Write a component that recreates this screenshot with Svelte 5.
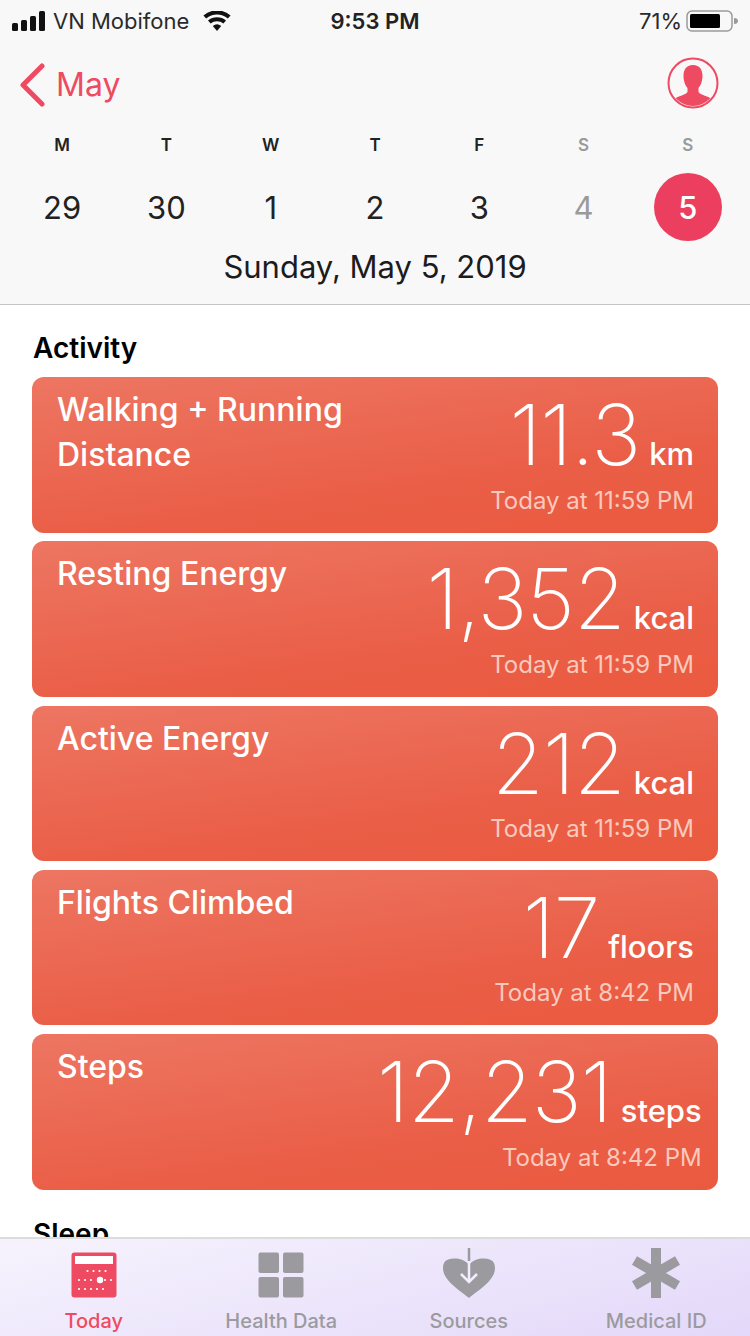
<script>
  const week = [
    { day: 'M', num: '29' },
    { day: 'T', num: '30' },
    { day: 'W', num: '1' },
    { day: 'T', num: '2' },
    { day: 'F', num: '3' },
    { day: 'S', num: '4', weekend: true },
    { day: 'S', num: '5', weekend: true, selected: true }
  ];

  const activity = [
    { title: 'Walking + Running Distance', value: '11.3', unit: 'km', time: 'Today at 11:59 PM' },
    { title: 'Resting Energy', value: '1,352', unit: 'kcal', time: 'Today at 11:59 PM' },
    { title: 'Active Energy', value: '212', unit: 'kcal', time: 'Today at 11:59 PM' },
    { title: 'Flights Climbed', value: '17', unit: 'floors', time: 'Today at 8:42 PM' },
    { title: 'Steps', value: '12,231', unit: 'steps', time: 'Today at 8:42 PM' }
  ];

  const calendarDots = [
    [84, 51], [90, 51], [96, 51], [102, 51]
  ];
</script>

<div class="screen">
  <header class="header">
    <div class="status">
      <div class="status-left">
        <svg class="signal" width="34" height="20" viewBox="0 0 34 20">
          <rect x="0" y="12" width="6" height="8" rx="1.5" />
          <rect x="9" y="9" width="6" height="11" rx="1.5" />
          <rect x="18" y="5" width="6" height="15" rx="1.5" />
          <rect x="27" y="0" width="6" height="20" rx="1.5" />
        </svg>
        <span class="carrier">VN Mobifone</span>
        <svg class="wifi" width="28" height="20" viewBox="0 0 28 20">
          <path d="M14 20 L9.8 15 A6.5 6.5 0 0 1 18.2 15 Z" />
          <path d="M7.6 12.6 L5 9.6 A14 14 0 0 1 23 9.6 L20.4 12.6 A10 10 0 0 0 7.6 12.6 Z" />
          <path d="M3.2 7.4 L0.4 4.4 A21 21 0 0 1 27.6 4.4 L24.8 7.4 A17 17 0 0 0 3.2 7.4 Z" />
        </svg>
      </div>
      <div class="clock">9:53 PM</div>
      <div class="status-right">
        <span class="percent">71%</span>
        <svg width="52" height="24" viewBox="0 0 52 24">
          <rect x="1" y="2" width="45" height="20" rx="5" fill="none" stroke="#9a9a9a" stroke-width="1.5" />
          <rect x="4" y="5" width="30" height="14" rx="1.5" fill="#000" />
          <path d="M48 9 a4 3 0 0 1 0 6 Z" fill="#9a9a9a" />
        </svg>
      </div>
    </div>

    <div class="nav">
      <div class="back">
        <svg width="28" height="44" viewBox="0 0 28 44">
          <path d="M24 3 L5 22 L24 41" fill="none" stroke="#ee4a62" stroke-width="5" stroke-linecap="round" stroke-linejoin="round" />
        </svg>
        <span>May</span>
      </div>
      <svg class="profile" width="52" height="52" viewBox="0 0 52 52">
        <defs>
          <clipPath id="profile-clip"><circle cx="26" cy="26" r="23" /></clipPath>
        </defs>
        <circle cx="26" cy="26" r="24.5" fill="none" stroke="#ee4a62" stroke-width="2" />
        <path clip-path="url(#profile-clip)" fill="#ee4a62" d="M26 8 C33 8 35.5 13 35.5 19 C35.5 24 33.5 29 31.5 31 L31.5 35 C33 38 42 39 46 43 L46 52 L6 52 L6 43 C10 39 19 38 20.5 35 L20.5 31 C18.5 29 16.5 24 16.5 19 C16.5 13 19 8 26 8 Z" />
      </svg>
    </div>

    <div class="week">
      {#each week as d}
        <div class="day" class:weekend={d.weekend}>
          <span class="dow">{d.day}</span>
          <span class="num" class:selected={d.selected}>{d.num}</span>
        </div>
      {/each}
    </div>

    <div class="full-date">Sunday, May 5, 2019</div>
  </header>

  <main class="content">
    <h2>Activity</h2>
    <div class="cards">
      {#each activity as item}
        <div class="card">
          <div class="title">{item.title}</div>
          <div class="reading">
            <div class="measure">
              <span class="value">{item.value}</span>
              <span class="unit">{item.unit}</span>
            </div>
            <div class="time">{item.time}</div>
          </div>
        </div>
      {/each}
    </div>
    <h2 class="next">Sleep</h2>
  </main>

  <nav class="tabs">
    <div class="tab active">
      <svg width="46" height="46" viewBox="0 0 46 46">
        <rect x="0.5" y="0.5" width="45" height="45" rx="3" fill="#ee4a62" />
        <rect x="4" y="4" width="38" height="8" fill="#fff" />
        <g fill="#fff">
          {#each [16, 22, 28, 34] as x}
            <circle cx={x + 0.5} cy="19" r="1.1" />
          {/each}
          {#each [8, 14, 20, 34, 40] as x}
            <circle cx={x} cy="28" r="1.1" />
          {/each}
          <circle cx="29" cy="28" r="3.2" />
          {#each [8, 14, 20, 26, 32] as x}
            <circle cx={x} cy="37" r="1.1" />
          {/each}
        </g>
      </svg>
      <span>Today</span>
    </div>
    <div class="tab">
      <svg width="46" height="46" viewBox="0 0 46 46" fill="#9b9a9f">
        <rect x="0.5" y="0.5" width="20.5" height="20.5" rx="2" />
        <rect x="25" y="0.5" width="20.5" height="20.5" rx="2" />
        <rect x="0.5" y="25" width="20.5" height="20.5" rx="2" />
        <rect x="25" y="25" width="20.5" height="20.5" rx="2" />
      </svg>
      <span>Health Data</span>
    </div>
    <div class="tab">
      <svg width="54" height="50" viewBox="0 0 54 50">
        <path fill="#9b9a9f" d="M27 50 C19 43 1 33 1 20 C1 11 8 10.500 13 10.500 C19 10.500 24 13 27 17 C30 13 35 10.500 41 10.500 C46 10.500 53 11 53 20 C53 33 35 43 27 50 Z" />
        <path d="M27 0 V33 M19 26 L27 34 L35 26" fill="none" stroke="#f3ecfd" stroke-width="2.500" />
        <path d="M27 0 V13" fill="none" stroke="#9b9a9f" stroke-width="2.500" />
      </svg>
      <span>Sources</span>
    </div>
    <div class="tab">
      <svg width="50" height="50" viewBox="0 0 50 50">
        <path d="M25 0 V50 M3.500 12.500 L46.500 37.500 M3.500 37.500 L46.500 12.500" fill="none" stroke="#9b9a9f" stroke-width="10" />
      </svg>
      <span>Medical ID</span>
    </div>
  </nav>
</div>

<style>
  :global(body) {
    margin: 0;
    background: #fff;
  }

  .screen {
    width: 750px;
    height: 1336px;
    display: flex;
    flex-direction: column;
    overflow: hidden;
    font-family: Inter, "Liberation Sans", sans-serif;
    color: #000;
  }

  .header {
    flex: none;
    height: 305px;
    box-sizing: border-box;
    background: #f8f8f8;
    border-bottom: 1px solid #c4c4c6;
  }

  .status {
    height: 40px;
    padding: 2px 12px 0;
    display: grid;
    grid-template-columns: 1fr auto 1fr;
    align-items: center;
    box-sizing: border-box;
    font-size: 22px;
    color: #2a2a2a;
  }

  .status-left {
    display: flex;
    align-items: center;
    gap: 7px;
  }

  .signal,
  .wifi {
    fill: #111;
  }

  .wifi {
    margin-left: 7px;
  }

  .clock {
    font-weight: 600;
    color: #222;
  }

  .status-right {
    display: flex;
    align-items: center;
    justify-content: flex-end;
    gap: 4px;
    padding-right: -2px;
  }

  .nav {
    height: 90px;
    padding: 0 31px 0 18px;
    box-sizing: border-box;
    display: flex;
    align-items: flex-start;
    justify-content: space-between;
  }

  .back {
    display: flex;
    align-items: center;
    gap: 10px;
    margin-top: 23px;
    color: #ee4a62;
    font-size: 32px;
    line-height: 44px;
  }

  .profile {
    margin-top: 17px;
  }

  .week {
    display: grid;
    grid-template-columns: repeat(7, 1fr);
    padding: 0 10px;
  }

  .day {
    display: flex;
    flex-direction: column;
    align-items: center;
  }

  .dow {
    font-size: 17px;
    font-weight: 600;
    line-height: 28px;
    margin-top: 1px;
    color: #222;
  }

  .weekend .dow,
  .weekend .num {
    color: #9a9a9a;
  }

  .num {
    width: 68px;
    height: 68px;
    margin-top: 14px;
    display: flex;
    align-items: center;
    justify-content: center;
    border-radius: 50%;
    font-size: 31px;
    color: #222;
  }

  .weekend .num.selected {
    background: #ec3f5f;
    color: #fff;
    font-weight: 500;
  }

  .full-date {
    margin-top: 4px;
    text-align: center;
    font-size: 31px;
    line-height: 44px;
    color: #1c1c1c;
  }

  .content {
    flex: 1;
    min-height: 0;
    overflow: hidden;
    padding: 0 32px;
  }

  h2 {
    margin: 25px 0 11px 1px;
    font-size: 28px;
    line-height: 36px;
    font-weight: 600;
  }

  h2.next {
    margin-top: 26px;
  }

  .cards {
    display: flex;
    flex-direction: column;
    gap: 8.75px;
  }

  .card {
    height: 155.5px;
    box-sizing: border-box;
    padding: 10px 24px 18px 25px;
    display: flex;
    justify-content: space-between;
    border-radius: 12px;
    background: linear-gradient(172deg, #ed7662 0%, #ea5e47 65%, #ea5a3f 100%);
    color: #fff;
  }

  .title {
    width: 320px;
    flex: none;
    font-size: 32px;
    line-height: 45px;
    font-weight: 500;
  }

  .reading {
    display: flex;
    flex-direction: column;
    align-items: flex-end;
    justify-content: space-between;
  }

  .measure {
    display: flex;
    align-items: baseline;
    gap: 9px;
    white-space: nowrap;
    line-height: 96px;
    height: 96px;
  }

  .value {
    font-size: 84px;
    font-weight: 200;
    letter-spacing: -1px;
  }

  .unit {
    font-size: 31px;
    font-weight: 500;
  }

  .time {
    font-size: 24px;
    line-height: 28px;
    color: #f9c9bd;
    white-space: nowrap;
  }

  .tabs {
    flex: none;
    height: 99px;
    box-sizing: border-box;
    border-top: 2px solid #dcdcdf;
    display: grid;
    grid-template-columns: repeat(4, 1fr);
    padding: 0;
    background: linear-gradient(165deg, #f6f3fd 0%, #ebe3fb 60%, #e3d8f9 100%);
  }

  .tab {
    display: flex;
    flex-direction: column;
    align-items: center;
    justify-content: flex-end;
    padding-bottom: 2px;
    font-size: 20px;
    font-weight: 500;
    line-height: 26px;
    color: #9b9a9f;
  }

  .tab svg {
    margin-bottom: 10px;
  }

  .tab.active {
    color: #ee4a62;
  }
</style>
